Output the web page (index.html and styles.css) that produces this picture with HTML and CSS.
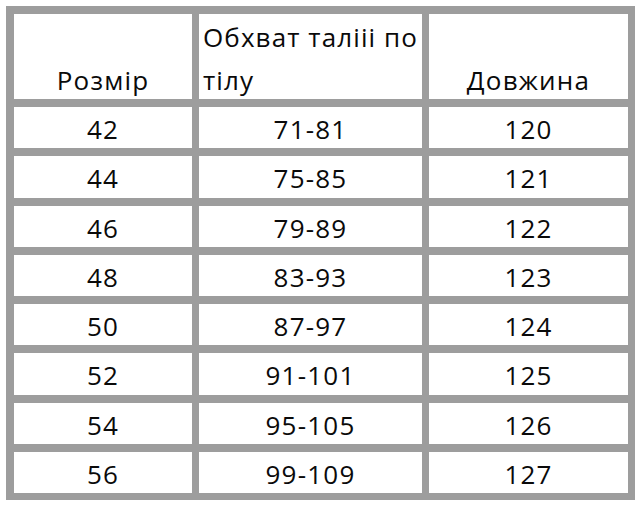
FILE: index.html
```html
<!DOCTYPE html>
<html lang="uk">
<head>
<meta charset="utf-8">
<title>Таблиця розмірів</title>
<link rel="stylesheet" href="styles.css">
</head>
<body>
<div class="size-table">
  <div class="cell head center"><span class="txt">Розмір</span></div>
  <div class="cell head left"><span class="txt">Обхват талііі по<br>тілу</span></div>
  <div class="cell head center"><span class="txt">Довжина</span></div>

  <div class="cell">42</div><div class="cell">71-81</div><div class="cell">120</div>
  <div class="cell">44</div><div class="cell">75-85</div><div class="cell">121</div>
  <div class="cell">46</div><div class="cell">79-89</div><div class="cell">122</div>
  <div class="cell">48</div><div class="cell">83-93</div><div class="cell">123</div>
  <div class="cell">50</div><div class="cell">87-97</div><div class="cell">124</div>
  <div class="cell">52</div><div class="cell">91-101</div><div class="cell">125</div>
  <div class="cell">54</div><div class="cell">95-105</div><div class="cell">126</div>
  <div class="cell">56</div><div class="cell">99-109</div><div class="cell">127</div>
</div>
</body>
</html>
```
FILE: styles.css
```css
html, body {
  margin: 0;
  padding: 0;
  background: #ffffff;
}
body {
  font-family: "Open Sans", "Noto Sans", sans-serif;
  color: #0a0a0a;
}
.size-table {
  box-sizing: border-box;
  margin: 6px 0 0 6px;
  width: 629px;
  height: 494px;
  padding: 8px 7px 7px 8px;
  background: #9d9d9d;
  display: grid;
  grid-template-columns: 178px 223px 199px;
  grid-template-rows: 85px repeat(8, 1fr);
  column-gap: 7px;
  row-gap: 8px;
}
.cell {
  background: #ffffff;
  font-size: 26px;
  font-weight: 500;
  letter-spacing: 1.2px;
  display: flex;
  align-items: center;
  justify-content: center;
  padding-top: 3px;
  box-sizing: border-box;
  line-height: 1;
}
.cell.head {
  align-items: flex-end;
  padding-top: 0;
}
.cell.head .txt {
  line-height: 43px;
  margin-bottom: -3px;
}
.cell.head.left {
  justify-content: flex-start;
  padding-left: 4px;
  letter-spacing: 1.1px;
}
```
